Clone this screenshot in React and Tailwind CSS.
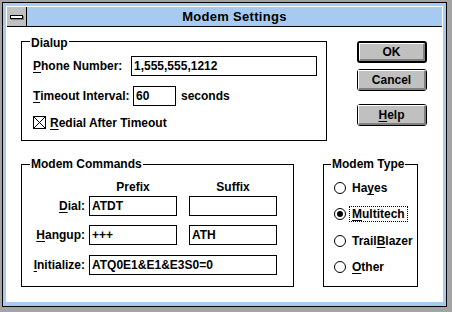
import React from "react";

const F = { fontFamily: '"Liberation Sans", Arial, sans-serif' };

function U({ children }) {
  return <span className="underline decoration-1 underline-offset-2">{children}</span>;
}

function Btn({ children, def }) {
  return (
    <div
      className={
        def
          ? "w-[70px] h-[22px] border-2 border-black rounded-[3px] flex"
          : "w-[70px] h-[22px] border border-black rounded-[3px] flex"
      }
    >
      <div className="flex-1 bg-[#c0c0c0] border-t border-l border-white border-r-2 border-b-2 border-r-[#808080] border-b-[#808080] flex items-center justify-center text-[12px] font-bold leading-none">
        {children}
      </div>
    </div>
  );
}

function Field({ w, value }) {
  return (
    <div
      className={`${w} h-[20px] border border-black bg-white flex items-center pl-[2px] text-[12px] font-bold leading-none`}
    >
      {value}
    </div>
  );
}

function GroupLabel({ pos, children }) {
  return (
    <div className={`absolute ${pos} bg-white px-[1px] text-[12px] leading-[13px] font-bold`}>
      {children}
    </div>
  );
}

function Radio({ checked, focus, children }) {
  return (
    <div className="flex items-center h-[20px] pl-[10px]">
      <div className="w-[12px] h-[12px] rounded-full border border-black bg-white flex items-center justify-center">
        {checked && <div className="w-[6px] h-[6px] rounded-full bg-black" />}
      </div>
      <span
        className={
          focus
            ? "ml-[3px] px-[2px] border border-dotted border-black text-[12px] font-bold leading-[14px]"
            : "ml-[3px] px-[2px] border border-transparent text-[12px] font-bold leading-[14px]"
        }
      >
        {children}
      </span>
    </div>
  );
}

export default function App() {
  return (
    <div className="w-[452px] h-[312px] bg-[#a4a4a4] pt-[2px] pl-[2px] text-black" style={F}>
      <div className="w-[445px] h-[305px] border border-black bg-[#a6caf0] pt-[3px] pb-[4px] px-[3px] flex">
        <div className="flex-1 bg-white p-[1px] flex flex-col">
          {/* caption */}
          <div className="h-[20px] flex border-b border-black bg-[#a6caf0]">
            <div className="w-[20px] bg-[#c0c0c0] border-r border-black flex items-center justify-center">
              <div className="w-[13px] h-[4px] border border-black bg-white shadow-[1px_1px_0_#808080] mr-[1px]" />
            </div>
            <div className="flex-1 flex items-center justify-center text-[13px] font-bold leading-none tracking-[0.3px]">
              Modem Settings
            </div>
          </div>

          {/* body */}
          <div className="pl-[14px] flex flex-col">
            <div className="mt-[14px] flex">
              {/* Dialup */}
              <div className="relative w-[306px] h-[100px] border border-black flex flex-col pl-[11px]">
                <GroupLabel pos="left-[8px] top-[-5px]">Dialup</GroupLabel>
                <div className="mt-[14px] flex items-center">
                  <div className="w-[98px] text-[12px] font-bold">
                    <U>P</U>hone Number:
                  </div>
                  <Field w="w-[186px]" value="1,555,555,1212" />
                </div>
                <div className="mt-[10px] flex items-center">
                  <div className="w-[100px] text-[12px] font-bold">
                    <U>T</U>imeout Interval:
                  </div>
                  <Field w="w-[43px]" value="60" />
                  <div className="ml-[5px] text-[12px] font-bold">seconds</div>
                </div>
                <div className="mt-[10px] flex items-center h-[13px]">
                  <svg width="13" height="13" viewBox="0 0 13 13" className="block">
                    <rect x="0.5" y="0.5" width="12" height="12" fill="white" stroke="black" />
                    <path d="M1 1 L12 12 M12 1 L1 12" stroke="black" strokeWidth="1" />
                  </svg>
                  <div className="ml-[4px] text-[12px] font-bold leading-none">
                    <U>R</U>edial After Timeout
                  </div>
                </div>
              </div>

              {/* buttons */}
              <div className="ml-[30px] flex flex-col">
                <Btn def>OK</Btn>
                <div className="mt-[6px]">
                  <Btn>Cancel</Btn>
                </div>
                <div className="mt-[13px]">
                  <Btn>
                    <span>
                      <U>H</U>elp
                    </span>
                  </Btn>
                </div>
              </div>
            </div>

            <div className="mt-[23px] flex">
              {/* Modem Commands */}
              <div className="relative w-[273px] h-[123px] border border-black flex flex-col pl-[11px]">
                <GroupLabel pos="left-[8px] top-[-7px]">Modem Commands</GroupLabel>
                <div className="mt-[15px] h-[14px] flex items-center text-[12px] font-bold">
                  <div className="w-[56px]" />
                  <div className="w-[88px] text-center">Prefix</div>
                  <div className="ml-[12px] w-[88px] text-center">Suffix</div>
                </div>
                <div className="mt-[2px] flex items-center">
                  <div className="w-[52px] text-right text-[12px] font-bold">
                    <U>D</U>ial:
                  </div>
                  <div className="ml-[4px]">
                    <Field w="w-[88px]" value="ATDT" />
                  </div>
                  <div className="ml-[12px]">
                    <Field w="w-[88px]" value="" />
                  </div>
                </div>
                <div className="mt-[9px] flex items-center">
                  <div className="w-[52px] text-right text-[12px] font-bold">
                    <U>H</U>angup:
                  </div>
                  <div className="ml-[4px]">
                    <Field w="w-[88px]" value="+++" />
                  </div>
                  <div className="ml-[12px]">
                    <Field w="w-[88px]" value="ATH" />
                  </div>
                </div>
                <div className="mt-[10px] flex items-center">
                  <div className="w-[52px] text-right text-[12px] font-bold">
                    <U>I</U>nitialize:
                  </div>
                  <div className="ml-[4px]">
                    <Field w="w-[188px]" value="ATQ0E1&E1&E3S0=0" />
                  </div>
                </div>
              </div>

              {/* Modem Type */}
              <div className="relative ml-[29px] w-[95px] h-[123px] border border-black flex flex-col">
                <GroupLabel pos="left-[7px] top-[-7px]">Modem Type</GroupLabel>
                <div className="mt-[13px]">
                  <Radio>
                    Ha<U>y</U>es
                  </Radio>
                </div>
                <div className="mt-[6px]">
                  <Radio checked focus>
                    <U>M</U>ultitech
                  </Radio>
                </div>
                <div className="mt-[7px]">
                  <Radio>
                    Trail<U>B</U>lazer
                  </Radio>
                </div>
                <div className="mt-[6px]">
                  <Radio>
                    <U>O</U>ther
                  </Radio>
                </div>
              </div>
            </div>
          </div>
        </div>
      </div>
    </div>
  );
}
